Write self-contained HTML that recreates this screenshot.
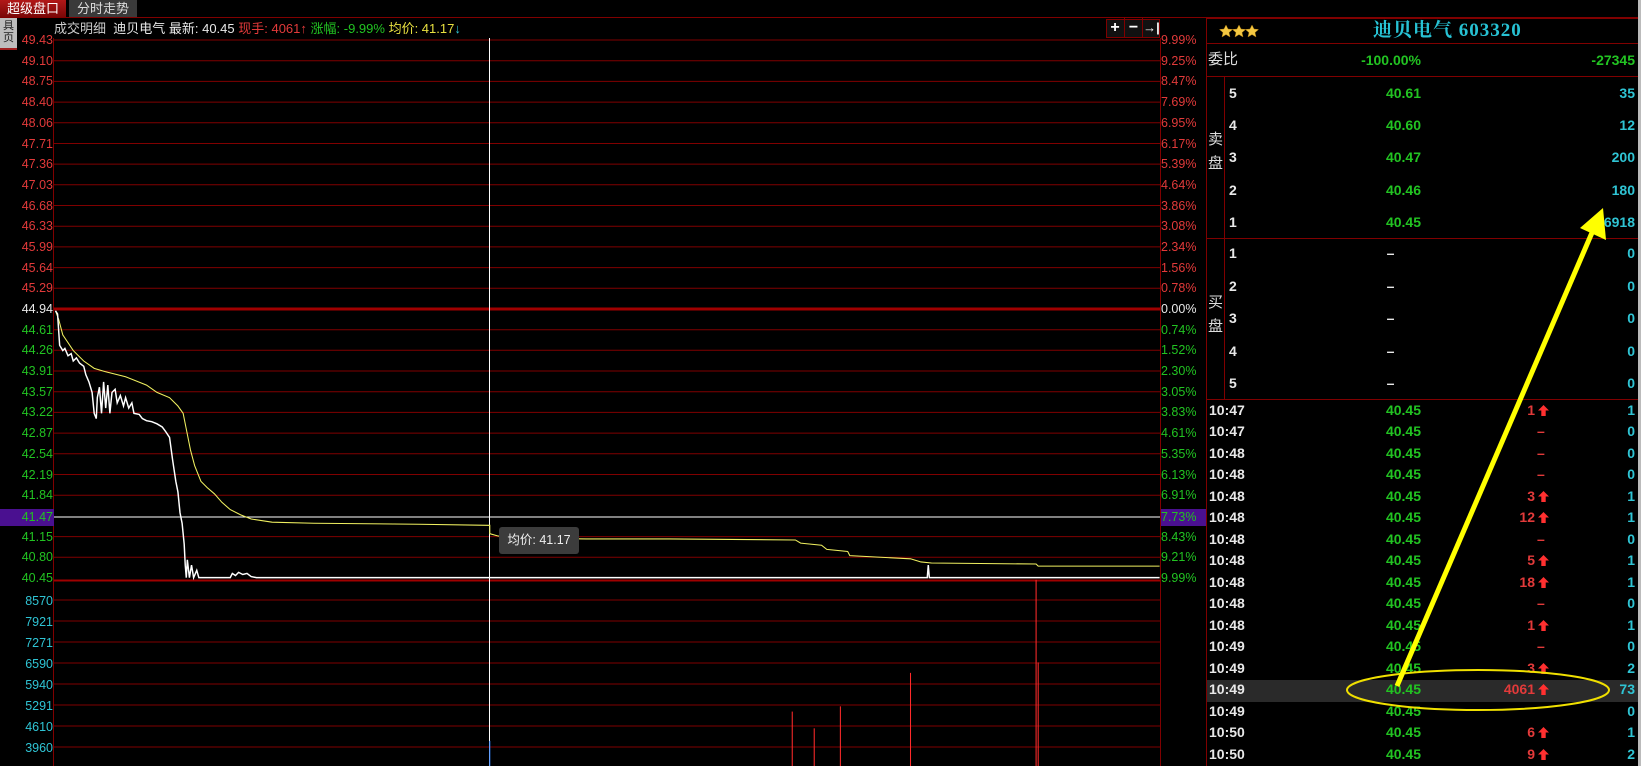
<!DOCTYPE html>
<html><head><meta charset="utf-8"><style>
*{margin:0;padding:0;box-sizing:border-box}
body{width:1641px;height:766px;background:#000;position:relative;overflow:hidden;font-family:"Liberation Sans","Noto Sans CJK SC",sans-serif;color:#ddd}
.a{position:absolute;white-space:nowrap}
.ll{position:absolute;left:0;width:53px;text-align:right;font-size:12.5px;height:14px;line-height:14px}
.pl{position:absolute;left:1161px;font-size:12.5px;height:14px;line-height:14px}
.r{color:#e23a3a}.g{color:#22c322}.w{color:#e8e8e8}.c{color:#2fc4d4}
.n{font-family:"Liberation Sans Narrow","Liberation Sans",sans-serif;font-weight:bold;font-size:14px}
</style></head><body>
<div class="a" style="left:0;top:0;width:66px;height:17px;background:linear-gradient(#b21818,#7a0808);color:#fff;font-size:13px;line-height:17px;text-align:center">超级盘口</div>
<div class="a" style="left:69px;top:0;width:68px;height:17px;background:#3a3a3a;color:#ddd;font-size:13px;line-height:17px;text-align:center">分时走势</div>
<div class="a" style="left:0;top:17px;width:1641px;height:1px;background:#800000"></div>
<div class="a" style="left:0;top:18px;width:17px;height:31px;background:#bdbdbd;color:#222;font-size:11px;line-height:12px;text-align:center;padding-top:2px">具<br>页</div>
<div class="a" style="left:0;top:48px;width:17px;height:2px;background:#a02020"></div>
<div class="a" style="left:54px;top:21px;font-size:13px;line-height:16px">
<span style="color:#ccc">成交明细</span>&nbsp; <span class="w">迪贝电气 最新: 40.45</span> <span class="r">现手: 4061</span><span class="r" style="font-weight:bold">↑</span> <span class="g">涨幅: -9.99%</span> <span style="color:#e8e040">均价: 41.17</span><span class="c" style="font-weight:bold">↓</span></div>
<div class="a" style="left:1106px;top:19px;width:54px;height:19px;border:1px solid #800000;background:#111"></div>
<div class="a" style="left:1106px;top:18px;width:18px;height:19px;color:#fff;font-weight:bold;font-size:16px;text-align:center;line-height:19px">+</div>
<div class="a" style="left:1124px;top:18px;width:18px;height:19px;color:#fff;font-weight:bold;font-size:16px;text-align:center;line-height:19px;border-left:1px solid #800000">−</div>
<div class="a" style="left:1142px;top:18px;width:18px;height:19px;color:#fff;font-weight:bold;font-size:13px;text-align:center;line-height:19px;border-left:1px solid #800000">→|</div>

<svg class="a" style="left:0;top:0" width="1641" height="766">
<g stroke="#800000" stroke-width="1">
<line x1="54" y1="40" x2="1160" y2="40"/><line x1="54" y1="60.7" x2="1160" y2="60.7"/><line x1="54" y1="81.4" x2="1160" y2="81.4"/><line x1="54" y1="102.1" x2="1160" y2="102.1"/><line x1="54" y1="122.8" x2="1160" y2="122.8"/><line x1="54" y1="143.5" x2="1160" y2="143.5"/><line x1="54" y1="164.1" x2="1160" y2="164.1"/><line x1="54" y1="184.8" x2="1160" y2="184.8"/><line x1="54" y1="205.5" x2="1160" y2="205.5"/><line x1="54" y1="226.2" x2="1160" y2="226.2"/><line x1="54" y1="246.9" x2="1160" y2="246.9"/><line x1="54" y1="267.6" x2="1160" y2="267.6"/><line x1="54" y1="288.3" x2="1160" y2="288.3"/><line x1="54" y1="329.7" x2="1160" y2="329.7"/><line x1="54" y1="350.3" x2="1160" y2="350.3"/><line x1="54" y1="371" x2="1160" y2="371"/><line x1="54" y1="391.7" x2="1160" y2="391.7"/><line x1="54" y1="412.4" x2="1160" y2="412.4"/><line x1="54" y1="433.1" x2="1160" y2="433.1"/><line x1="54" y1="453.8" x2="1160" y2="453.8"/><line x1="54" y1="474.5" x2="1160" y2="474.5"/><line x1="54" y1="495.2" x2="1160" y2="495.2"/><line x1="54" y1="536.6" x2="1160" y2="536.6"/><line x1="54" y1="557.2" x2="1160" y2="557.2"/>
<line x1="54" y1="600" x2="1160" y2="600"/><line x1="54" y1="621" x2="1160" y2="621"/><line x1="54" y1="642" x2="1160" y2="642"/><line x1="54" y1="663" x2="1160" y2="663"/><line x1="54" y1="684" x2="1160" y2="684"/><line x1="54" y1="705" x2="1160" y2="705"/><line x1="54" y1="726" x2="1160" y2="726"/><line x1="54" y1="747" x2="1160" y2="747"/>
<line x1="53.5" y1="38" x2="53.5" y2="766"/><line x1="1160.5" y1="38" x2="1160.5" y2="766"/><line x1="1206.5" y1="18" x2="1206.5" y2="766"/>
</g>
<line x1="54" y1="309" x2="1160" y2="309" stroke="#a00000" stroke-width="3"/>
<line x1="54" y1="580.5" x2="1160" y2="580.5" stroke="#a00000" stroke-width="2"/>
<line x1="54" y1="517" x2="1160" y2="517" stroke="#fff" stroke-width="1"/>
<line x1="489.5" y1="38" x2="489.5" y2="766" stroke="#fff" stroke-width="1"/>
<rect x="0" y="509" width="54" height="17" fill="#4a1090"/>
<rect x="1161" y="509" width="45" height="17" fill="#4a1090"/>
</svg>
<svg class="a" style="left:0;top:0" width="1641" height="766" viewBox="0 0 1568 732" preserveAspectRatio="none">
<polyline fill="none" stroke="#f0f060" stroke-width="1" points="53,297 56,305 60,320 64,326 70,335 80,345 90,352 100,355 120,360 140,368 150,375 162,380 170,388 175,395 178,410 182,430 186,445 192,460 198,466 205,472 212,480 220,487 230,492 240,496 260,499 300,500 400,501 466,502 468,502 468,510 475,512 485,514 560,515 640,515 760,516 765,519 785,521 790,525 810,527 812,531 870,534 880,537 890,538 990,539 992,541 1108,541"/>
<polyline fill="none" stroke="#fff" stroke-width="1.4" points="53,297 55,300 57,330 60,335 62,333 65,340 68,338 70,345 73,342 76,347 80,350 82,358 85,365 88,375 90,395 92,400 93,380 95,370 97,395 99,365 101,390 103,368 105,395 107,375 110,372 112,385 115,378 118,388 120,380 123,390 126,385 128,395 133,396 136,400 140,402 145,403 150,405 155,408 158,412 162,418 165,440 168,460 170,470 172,490 174,500 176,520 177,540 178,552 179,535 181,552 183,540 185,552 188,545 190,552 220,552 222,548 225,550 228,547 232,549 236,548 240,551 245,552 886,552 887,540 888,552 1108,552"/>
<g stroke="#ff2a2a" stroke-width="1">
<line x1="757" y1="680" x2="757" y2="732"/><line x1="778" y1="696" x2="778" y2="732"/><line x1="803" y1="675" x2="803" y2="732"/><line x1="870" y1="643" x2="870" y2="732"/><line x1="990" y1="554" x2="990" y2="732"/><line x1="992" y1="633" x2="992" y2="732"/>
</g>
<line x1="468" y1="708" x2="468" y2="732" stroke="#3080ff" stroke-width="1"/>
</svg>
<div class="a" style="left:499px;top:527px;width:80px;height:27px;background:#3c3c3c;border-radius:3px;color:#eee;font-size:12.5px;line-height:27px;text-align:center">均价: 41.17</div>

<div class="ll r" style="top:33px">49.43</div><div class="ll r" style="top:53.7px">49.10</div><div class="ll r" style="top:74.4px">48.75</div><div class="ll r" style="top:95.1px">48.40</div><div class="ll r" style="top:115.8px">48.06</div><div class="ll r" style="top:136.5px">47.71</div><div class="ll r" style="top:157.1px">47.36</div><div class="ll r" style="top:177.8px">47.03</div><div class="ll r" style="top:198.5px">46.68</div><div class="ll r" style="top:219.2px">46.33</div><div class="ll r" style="top:239.9px">45.99</div><div class="ll r" style="top:260.6px">45.64</div><div class="ll r" style="top:281.3px">45.29</div><div class="ll w" style="top:302px">44.94</div>
<div class="ll g" style="top:322.7px">44.61</div><div class="ll g" style="top:343.3px">44.26</div><div class="ll g" style="top:364px">43.91</div><div class="ll g" style="top:384.7px">43.57</div><div class="ll g" style="top:405.4px">43.22</div><div class="ll g" style="top:426.1px">42.87</div><div class="ll g" style="top:446.8px">42.54</div><div class="ll g" style="top:467.5px">42.19</div><div class="ll g" style="top:488.2px">41.84</div><div class="ll g" style="top:509.9px">41.47</div><div class="ll g" style="top:529.6px">41.15</div><div class="ll g" style="top:550.2px">40.80</div><div class="ll g" style="top:571px">40.45</div>
<div class="ll c" style="top:594px">8570</div><div class="ll c" style="top:615px">7921</div><div class="ll c" style="top:636px">7271</div><div class="ll c" style="top:657px">6590</div><div class="ll c" style="top:678px">5940</div><div class="ll c" style="top:699px">5291</div><div class="ll c" style="top:720px">4610</div><div class="ll c" style="top:741px">3960</div>
<div class="pl r" style="top:33px">9.99%</div><div class="pl r" style="top:53.7px">9.25%</div><div class="pl r" style="top:74.4px">8.47%</div><div class="pl r" style="top:95.1px">7.69%</div><div class="pl r" style="top:115.8px">6.95%</div><div class="pl r" style="top:136.5px">6.17%</div><div class="pl r" style="top:157.1px">5.39%</div><div class="pl r" style="top:177.8px">4.64%</div><div class="pl r" style="top:198.5px">3.86%</div><div class="pl r" style="top:219.2px">3.08%</div><div class="pl r" style="top:239.9px">2.34%</div><div class="pl r" style="top:260.6px">1.56%</div><div class="pl r" style="top:281.3px">0.78%</div><div class="pl w" style="top:302px">0.00%</div>
<div class="pl g" style="top:322.7px">0.74%</div><div class="pl g" style="top:343.3px">1.52%</div><div class="pl g" style="top:364px">2.30%</div><div class="pl g" style="top:384.7px">3.05%</div><div class="pl g" style="top:405.4px">3.83%</div><div class="pl g" style="top:426.1px">4.61%</div><div class="pl g" style="top:446.8px">5.35%</div><div class="pl g" style="top:467.5px">6.13%</div><div class="pl g" style="top:488.2px">6.91%</div><div class="pl g" style="top:509.9px">7.73%</div><div class="pl g" style="top:529.6px">8.43%</div><div class="pl g" style="top:550.2px">9.21%</div><div class="pl g" style="top:571px">9.99%</div>

<div class="a" style="left:1638px;top:0;width:3px;height:766px;background:#bbb"></div>
<svg class="a" style="left:1206px;top:0" width="432" height="766">
<g stroke="#800000" stroke-width="1">
<line x1="0" y1="18.5" x2="432" y2="18.5"/><line x1="0" y1="43.5" x2="432" y2="43.5"/><line x1="0" y1="76.5" x2="432" y2="76.5"/><line x1="0" y1="238.5" x2="432" y2="238.5"/><line x1="0" y1="399.5" x2="432" y2="399.5"/>
<line x1="18.5" y1="76" x2="18.5" y2="399"/>
</g>
<g fill="#f5c842" stroke="#b08010" stroke-width="0.5">
<polygon points="20,25 22,29 26.5,29.5 23,32.5 24,37 20,34.5 16,37 17,32.5 13.5,29.5 18,29"/>
<polygon points="33,25 35,29 39.5,29.5 36,32.5 37,37 33,34.5 29,37 30,32.5 26.5,29.5 31,29"/>
<polygon points="46,25 48,29 52.5,29.5 49,32.5 50,37 46,34.5 42,37 43,32.5 39.5,29.5 44,29"/>
</g>
</svg>
<div class="a" style="left:1373px;top:19px;color:#27c2d4;font-weight:bold;font-size:19px;line-height:24px;letter-spacing:1px;font-family:'Liberation Serif','Noto Serif CJK SC',serif">迪贝电气 603320</div>
<div class="a" style="left:1208px;top:51px;font-size:15px;color:#ddd;line-height:18px">委比</div>
<div class="a g n" style="left:1320px;top:52px;width:101px;text-align:right">-100.00%</div>
<div class="a g n" style="left:1540px;top:52px;width:95px;text-align:right">-27345</div>
<div class="a" style="left:1208px;top:128px;font-size:15px;line-height:24px;color:#ddd">卖<br>盘</div>
<div class="a" style="left:1208px;top:291px;font-size:15px;line-height:24px;color:#ddd">买<br>盘</div>

<div class="a n w" style="left:1229px;top:85px;line-height:16px">5</div><div class="a n g" style="left:1360px;top:85px;width:61px;text-align:right">40.61</div><div class="a n c" style="left:1560px;top:85px;width:75px;text-align:right">35</div>
<div class="a n w" style="left:1229px;top:117px">4</div><div class="a n g" style="left:1360px;top:117px;width:61px;text-align:right">40.60</div><div class="a n c" style="left:1560px;top:117px;width:75px;text-align:right">12</div>
<div class="a n w" style="left:1229px;top:149px">3</div><div class="a n g" style="left:1360px;top:149px;width:61px;text-align:right">40.47</div><div class="a n c" style="left:1560px;top:149px;width:75px;text-align:right">200</div>
<div class="a n w" style="left:1229px;top:182px">2</div><div class="a n g" style="left:1360px;top:182px;width:61px;text-align:right">40.46</div><div class="a n c" style="left:1560px;top:182px;width:75px;text-align:right">180</div>
<div class="a n w" style="left:1229px;top:214px">1</div><div class="a n g" style="left:1360px;top:214px;width:61px;text-align:right">40.45</div><div class="a n c" style="left:1560px;top:214px;width:75px;text-align:right">6918</div>

<div class="a n w" style="left:1229px;top:245px">1</div><div class="a n w" style="left:1360px;top:245px;width:61px;text-align:center">–</div><div class="a n c" style="left:1560px;top:245px;width:75px;text-align:right">0</div>
<div class="a n w" style="left:1229px;top:278px">2</div><div class="a n w" style="left:1360px;top:278px;width:61px;text-align:center">–</div><div class="a n c" style="left:1560px;top:278px;width:75px;text-align:right">0</div>
<div class="a n w" style="left:1229px;top:310px">3</div><div class="a n w" style="left:1360px;top:310px;width:61px;text-align:center">–</div><div class="a n c" style="left:1560px;top:310px;width:75px;text-align:right">0</div>
<div class="a n w" style="left:1229px;top:343px">4</div><div class="a n w" style="left:1360px;top:343px;width:61px;text-align:center">–</div><div class="a n c" style="left:1560px;top:343px;width:75px;text-align:right">0</div>
<div class="a n w" style="left:1229px;top:375px">5</div><div class="a n w" style="left:1360px;top:375px;width:61px;text-align:center">–</div><div class="a n c" style="left:1560px;top:375px;width:75px;text-align:right">0</div>

<div class="a" style="left:1207px;top:680px;width:431px;height:22px;background:#2a2a2a"></div>
<svg width="0" height="0" style="position:absolute"><defs><symbol id="up" viewBox="0 0 10 10"><polygon points="5,0 10,5 7,5 7,10 3,10 3,5 0,5" fill="#ff3030"/></symbol></defs></svg>
<div class="a" style="left:0;top:0">
<div class="a n w" style="left:1209px;top:402px">10:47</div><div class="a n g" style="left:1360px;top:402px;width:61px;text-align:right">40.45</div><div class="a n r" style="left:1480px;top:402px;width:55px;text-align:right">1</div><svg class="a" style="left:1538px;top:405px" width="11" height="11"><use href="#up"/></svg><div class="a n c" style="left:1560px;top:402px;width:75px;text-align:right">1</div>
<div class="a n w" style="left:1209px;top:423px">10:47</div><div class="a n g" style="left:1360px;top:423px;width:61px;text-align:right">40.45</div><div class="a n r" style="left:1537px;top:423px">–</div><div class="a n c" style="left:1560px;top:423px;width:75px;text-align:right">0</div>
<div class="a n w" style="left:1209px;top:445px">10:48</div><div class="a n g" style="left:1360px;top:445px;width:61px;text-align:right">40.45</div><div class="a n r" style="left:1537px;top:445px">–</div><div class="a n c" style="left:1560px;top:445px;width:75px;text-align:right">0</div>
<div class="a n w" style="left:1209px;top:466px">10:48</div><div class="a n g" style="left:1360px;top:466px;width:61px;text-align:right">40.45</div><div class="a n r" style="left:1537px;top:466px">–</div><div class="a n c" style="left:1560px;top:466px;width:75px;text-align:right">0</div>
<div class="a n w" style="left:1209px;top:488px">10:48</div><div class="a n g" style="left:1360px;top:488px;width:61px;text-align:right">40.45</div><div class="a n r" style="left:1480px;top:488px;width:55px;text-align:right">3</div><svg class="a" style="left:1538px;top:491px" width="11" height="11"><use href="#up"/></svg><div class="a n c" style="left:1560px;top:488px;width:75px;text-align:right">1</div>
<div class="a n w" style="left:1209px;top:509px">10:48</div><div class="a n g" style="left:1360px;top:509px;width:61px;text-align:right">40.45</div><div class="a n r" style="left:1480px;top:509px;width:55px;text-align:right">12</div><svg class="a" style="left:1538px;top:512px" width="11" height="11"><use href="#up"/></svg><div class="a n c" style="left:1560px;top:509px;width:75px;text-align:right">1</div>
<div class="a n w" style="left:1209px;top:531px">10:48</div><div class="a n g" style="left:1360px;top:531px;width:61px;text-align:right">40.45</div><div class="a n r" style="left:1537px;top:531px">–</div><div class="a n c" style="left:1560px;top:531px;width:75px;text-align:right">0</div>
<div class="a n w" style="left:1209px;top:552px">10:48</div><div class="a n g" style="left:1360px;top:552px;width:61px;text-align:right">40.45</div><div class="a n r" style="left:1480px;top:552px;width:55px;text-align:right">5</div><svg class="a" style="left:1538px;top:555px" width="11" height="11"><use href="#up"/></svg><div class="a n c" style="left:1560px;top:552px;width:75px;text-align:right">1</div>
<div class="a n w" style="left:1209px;top:574px">10:48</div><div class="a n g" style="left:1360px;top:574px;width:61px;text-align:right">40.45</div><div class="a n r" style="left:1480px;top:574px;width:55px;text-align:right">18</div><svg class="a" style="left:1538px;top:577px" width="11" height="11"><use href="#up"/></svg><div class="a n c" style="left:1560px;top:574px;width:75px;text-align:right">1</div>
<div class="a n w" style="left:1209px;top:595px">10:48</div><div class="a n g" style="left:1360px;top:595px;width:61px;text-align:right">40.45</div><div class="a n r" style="left:1537px;top:595px">–</div><div class="a n c" style="left:1560px;top:595px;width:75px;text-align:right">0</div>
<div class="a n w" style="left:1209px;top:617px">10:48</div><div class="a n g" style="left:1360px;top:617px;width:61px;text-align:right">40.45</div><div class="a n r" style="left:1480px;top:617px;width:55px;text-align:right">1</div><svg class="a" style="left:1538px;top:620px" width="11" height="11"><use href="#up"/></svg><div class="a n c" style="left:1560px;top:617px;width:75px;text-align:right">1</div>
<div class="a n w" style="left:1209px;top:638px">10:49</div><div class="a n g" style="left:1360px;top:638px;width:61px;text-align:right">40.45</div><div class="a n r" style="left:1537px;top:638px">–</div><div class="a n c" style="left:1560px;top:638px;width:75px;text-align:right">0</div>
<div class="a n w" style="left:1209px;top:660px">10:49</div><div class="a n g" style="left:1360px;top:660px;width:61px;text-align:right">40.45</div><div class="a n r" style="left:1480px;top:660px;width:55px;text-align:right">3</div><svg class="a" style="left:1538px;top:663px" width="11" height="11"><use href="#up"/></svg><div class="a n c" style="left:1560px;top:660px;width:75px;text-align:right">2</div>
<div class="a n w" style="left:1209px;top:681px">10:49</div><div class="a n g" style="left:1360px;top:681px;width:61px;text-align:right">40.45</div><div class="a n r" style="left:1480px;top:681px;width:55px;text-align:right">4061</div><svg class="a" style="left:1538px;top:684px" width="11" height="11"><use href="#up"/></svg><div class="a n c" style="left:1560px;top:681px;width:75px;text-align:right">73</div>
<div class="a n w" style="left:1209px;top:703px">10:49</div><div class="a n g" style="left:1360px;top:703px;width:61px;text-align:right">40.45</div><div class="a n c" style="left:1560px;top:703px;width:75px;text-align:right">0</div>
<div class="a n w" style="left:1209px;top:724px">10:50</div><div class="a n g" style="left:1360px;top:724px;width:61px;text-align:right">40.45</div><div class="a n r" style="left:1480px;top:724px;width:55px;text-align:right">6</div><svg class="a" style="left:1538px;top:727px" width="11" height="11"><use href="#up"/></svg><div class="a n c" style="left:1560px;top:724px;width:75px;text-align:right">1</div>
<div class="a n w" style="left:1209px;top:746px">10:50</div><div class="a n g" style="left:1360px;top:746px;width:61px;text-align:right">40.45</div><div class="a n r" style="left:1480px;top:746px;width:55px;text-align:right">9</div><svg class="a" style="left:1538px;top:749px" width="11" height="11"><use href="#up"/></svg><div class="a n c" style="left:1560px;top:746px;width:75px;text-align:right">2</div>
</div>
<svg class="a" style="left:0;top:0" width="1641" height="766">
<ellipse cx="1478" cy="690" rx="131" ry="20" fill="none" stroke="#f0e000" stroke-width="2"/>
<line x1="1397" y1="686" x2="1594" y2="228" stroke="#ffff00" stroke-width="5"/>
<polygon points="1603,208 1606,240 1580,228" fill="#ffff00"/>
</svg>
</body></html>
